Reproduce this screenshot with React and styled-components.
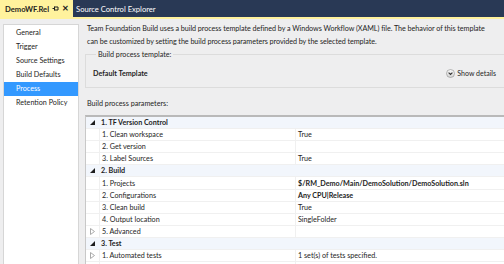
import React from 'react';
import styled, { createGlobalStyle } from 'styled-components';

const GlobalStyle = createGlobalStyle`
  html, body {
    margin: 0;
    padding: 0;
    background: #eeeeef;
  }
  body {
    font-family: "Segoe UI", Lato, "Open Sans", sans-serif;
    font-size: 7.2px;
    color: #1e1e1e;
  }
`;

const Page = styled.div`
  width: 504px;
  height: 264px;
  overflow: hidden;
  display: flex;
  flex-direction: column;
  background: #eeeeef;
`;

const TabBar = styled.div`
  height: 17px;
  background: #293955;
  border-bottom: 2px solid #fff29d;
  display: flex;
  align-items: stretch;
  flex-shrink: 0;
`;

const Tab = styled.div`
  display: flex;
  align-items: center;
  gap: 3px;
  padding: 0 4px 0 ${p => (p.active ? '5px' : '3px')};
  background: ${p => (p.active ? '#fff29d' : 'transparent')};
  color: ${p => (p.active ? '#1e1e1e' : '#ffffff')};
  font-weight: ${p => (p.active ? 700 : 400)};
  font-size: 7.6px;
`;

const TabGlyph = styled.span`
  display: flex;
  align-items: center;
  font-size: 7.6px;
  font-weight: 700;
  line-height: 1;
`;

const Body = styled.div`
  flex: 1;
  display: flex;
  gap: 6px;
  padding: 5px 0 0 3px;
  min-height: 0;
`;

const NavList = styled.div`
  width: 74px;
  flex-shrink: 0;
  background: #ffffff;
  border: 1px solid #d6d6d6;
  border-bottom: none;
  padding-top: 1px;
`;

const NavItem = styled.div`
  height: 14px;
  line-height: 14px;
  padding-left: 12px;
  white-space: nowrap;
  background: ${p => (p.selected ? '#3399ff' : 'transparent')};
  color: ${p => (p.selected ? '#ffffff' : '#1e1e1e')};
`;

const Content = styled.div`
  flex: 1;
  display: flex;
  flex-direction: column;
  min-width: 0;
  min-height: 0;
`;

const Description = styled.p`
  flex-shrink: 0;
  margin: -2px 0 0 2px;
  line-height: 13px;
  white-space: nowrap;
  letter-spacing: -0.05px;
`;

const TemplateBox = styled.fieldset`
  flex-shrink: 0;
  margin: 2px -4px 0 0;
  padding: 0 12px 0 7px;
  border: 1px solid #dcdcdc;
  border-right: none;
`;

const Legend = styled.legend`
  padding: 0 2px;
  margin-left: 3px;
  line-height: 9px;
`;

const TemplateRow = styled.div`
  height: 28px;
  display: flex;
  align-items: center;
  justify-content: space-between;
`;

const TemplateName = styled.span`
  font-weight: 700;
`;

const DetailsToggle = styled.span`
  display: flex;
  align-items: center;
  gap: 2px;
  font-size: 7px;
`;

const SectionLabel = styled.div`
  flex-shrink: 0;
  margin: 11px 0 0 2px;
  height: 16px;
  line-height: 10px;
`;

const Grid = styled.div`
  flex: 1;
  min-height: 0;
  overflow: hidden;
  border-top: 2px solid #b9b9b9;
  border-left: 1px solid #c8c8c8;
  background: #ffffff;
  display: grid;
  grid-template-columns: 13px 196px 1fr;
  grid-auto-rows: 12.1px;
  align-content: start;
`;

const Cell = styled.div`
  display: flex;
  align-items: center;
  border-bottom: 1px solid #f0f0f0;
  border-left: ${p => (p.divider ? '1px solid #f0f0f0' : 'none')};
  padding-left: ${p => (p.divider ? '2px' : '0')};
  background: ${p => (p.group ? '#f2f6fc' : '#ffffff')};
  font-weight: ${p => (p.bold ? 700 : 400)};
  white-space: nowrap;
  overflow: hidden;
  justify-content: ${p => (p.center ? 'center' : 'flex-start')};
`;

const GroupCell = styled(Cell)`
  grid-column: 2 / 4;
  padding-left: 2px;
`;

const Expanded = () => (
  <svg width="5" height="5" viewBox="0 0 5 5">
    <path d="M5 0 L5 5 L0 5 Z" fill="#1e1e1e" />
  </svg>
);

const Collapsed = () => (
  <svg width="5" height="7" viewBox="0 0 5 7">
    <path d="M0.5 0.5 L4.5 3.5 L0.5 6.5 Z" fill="none" stroke="#a0a0a0" strokeWidth="0.9" />
  </svg>
);

const DetailsIcon = () => (
  <svg width="9" height="9" viewBox="0 0 9 9">
    <defs>
      <linearGradient id="dg" x1="0" y1="0" x2="0" y2="1">
        <stop offset="0" stopColor="#fbfbfb" />
        <stop offset="1" stopColor="#d4d4d4" />
      </linearGradient>
    </defs>
    <circle cx="4.5" cy="4.5" r="4" fill="url(#dg)" stroke="#9a9a9a" strokeWidth="0.7" />
    <path d="M2.6 3.6 L4.5 5.5 L6.4 3.6" fill="none" stroke="#333" strokeWidth="1.1" />
  </svg>
);

const PinIcon = () => (
  <svg width="7" height="7" viewBox="0 0 7 7">
    <path d="M0.5 3.5 H2.5 M2.5 1.5 V5.5 M2.5 2 H6 M2.5 5 H6 M6 2 V5" fill="none" stroke="#1e1e1e" strokeWidth="1" />
  </svg>
);

const navItems = ['General', 'Trigger', 'Source Settings', 'Build Defaults', 'Process', 'Retention Policy'];

const params = [
  { group: '1. TF Version Control' },
  { label: '1. Clean workspace', value: 'True' },
  { label: '2. Get version', value: '' },
  { label: '3. Label Sources', value: 'True' },
  { group: '2. Build' },
  { label: '1. Projects', value: '$/RM_Demo/Main/DemoSolution/DemoSolution.sln', bold: true },
  { label: '2. Configurations', value: 'Any CPU|Release', bold: true },
  { label: '3. Clean build', value: 'True' },
  { label: '4. Output location', value: 'SingleFolder' },
  { label: '5. Advanced', value: '', collapsed: true },
  { group: '3. Test' },
  { label: '1. Automated tests', value: '1 set(s) of tests specified.', collapsed: true },
  { label: '', value: '' },
];

const App = () => (
  <Page>
    <GlobalStyle />
    <TabBar>
      <Tab active>
        DemoWF.Rel
        <TabGlyph><PinIcon /></TabGlyph>
        <TabGlyph>✕</TabGlyph>
      </Tab>
      <Tab>Source Control Explorer</Tab>
    </TabBar>
    <Body>
      <NavList>
        {navItems.map(item => (
          <NavItem key={item} selected={item === 'Process'}>{item}</NavItem>
        ))}
      </NavList>
      <Content>
        <Description>
          Team Foundation Build uses a build process template defined by a Windows Workflow (XAML) file. The behavior of this template
          <br />
          can be customized by setting the build process parameters provided by the selected template.
        </Description>
        <TemplateBox>
          <Legend>Build process template:</Legend>
          <TemplateRow>
            <TemplateName>Default Template</TemplateName>
            <DetailsToggle>
              <DetailsIcon />
              Show details
            </DetailsToggle>
          </TemplateRow>
        </TemplateBox>
        <SectionLabel>Build process parameters:</SectionLabel>
        <Grid>
          {params.map((row, i) =>
            row.group ? (
              <React.Fragment key={i}>
                <Cell group center><Expanded /></Cell>
                <GroupCell group bold>{row.group}</GroupCell>
              </React.Fragment>
            ) : (
              <React.Fragment key={i}>
                <Cell center>{row.collapsed && <Collapsed />}</Cell>
                <Cell divider>{row.label}</Cell>
                <Cell divider bold={row.bold}>{row.value}</Cell>
              </React.Fragment>
            )
          )}
        </Grid>
      </Content>
    </Body>
  </Page>
);

export default App;
